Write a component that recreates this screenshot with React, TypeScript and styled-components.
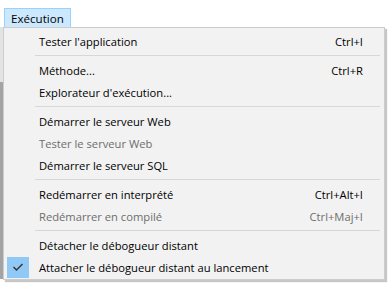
import React from 'react';
import styled, { createGlobalStyle } from 'styled-components';

const GlobalStyle = createGlobalStyle`
    html, body {
        margin: 0;
        padding: 0;
        background: #ffffff;
    }
    body {
        font-family: "Segoe UI", "Open Sans", "Noto Sans", sans-serif;
        font-size: 11.2px;
        color: #000000;
    }
`;

type MenuEntry =
    | { kind: 'item', label: string, shortcut?: string, disabled?: boolean, checked?: boolean }
    | { kind: 'separator' };

const entries: MenuEntry[] = [
    { kind: 'item', label: "Tester l'application", shortcut: 'Ctrl+I' },
    { kind: 'separator' },
    { kind: 'item', label: 'Méthode...', shortcut: 'Ctrl+R' },
    { kind: 'item', label: "Explorateur d'exécution..." },
    { kind: 'separator' },
    { kind: 'item', label: 'Démarrer le serveur Web' },
    { kind: 'item', label: 'Tester le serveur Web', disabled: true },
    { kind: 'item', label: 'Démarrer le serveur SQL' },
    { kind: 'separator' },
    { kind: 'item', label: 'Redémarrer en interprété', shortcut: 'Ctrl+Alt+I' },
    { kind: 'item', label: 'Redémarrer en compilé', shortcut: 'Ctrl+Maj+I', disabled: true },
    { kind: 'separator' },
    { kind: 'item', label: 'Détacher le débogueur distant' },
    { kind: 'item', label: 'Attacher le débogueur distant au lancement', checked: true },
];

const Page = styled.div`
    width: 389px;
    height: 286px;
    display: flex;
    flex-direction: column;
    overflow: hidden;
`;

const MenuBar = styled.div`
    height: 27px;
    box-sizing: border-box;
    padding: 8px 0 0 4px;
    display: flex;
    align-items: flex-start;
`;

const MenuTitle = styled.div`
    height: 19px;
    box-sizing: border-box;
    padding: 0 6px;
    display: flex;
    align-items: center;
    font-size: 11.6px;
    background: #cce8ff;
    border: 1px solid #99d1ff;
    border-bottom: none;
`;

const Body = styled.div`
    display: flex;
    align-items: flex-start;
`;

const BehindWindow = styled.div`
    width: 3px;
    height: 252px;
    background: linear-gradient(#e3e3e3 0 55px, #a3a3a3 55px);
`;

const Dropdown = styled.div`
    width: 382px;
    box-sizing: border-box;
    padding: 2px 2px 1px;
    background: #f2f2f2;
    border: 1px solid #cccccc;
    box-shadow: 2px 2px 1px rgba(0, 0, 0, 0.22);
`;

const Item = styled.div<{ $disabled?: boolean }>`
    height: 22px;
    display: grid;
    grid-template-columns: 32px 1fr auto;
    align-items: center;
    color: ${(props) => props.$disabled ? '#6d6d6d' : '#000000'};
    white-space: nowrap;
`;

const CheckCell = styled.div<{ $checked?: boolean }>`
    width: 22px;
    height: 21px;
    margin-left: 1px;
    display: flex;
    align-items: center;
    justify-content: center;
    background: ${(props) => props.$checked ? '#90c8f6' : 'transparent'};
`;

const Label = styled.span`
    padding-left: 1px;
`;

const Shortcut = styled.span`
    padding-right: 19px;
    text-align: right;
`;

const Separator = styled.div`
    height: 1px;
    margin: 3px 2px 3px 29px;
    background: #d7d7d7;
`;

const CheckMark = () => (
    <svg width="12" height="10" viewBox="0 0 12 10">
        <polyline points="1.5,5 4.5,8 10.5,2" fill="none" stroke="#333333" strokeWidth="1.4" />
    </svg>
);

export default function App() {
    return (
        <>
            <GlobalStyle />
            <Page>
                <MenuBar>
                    <MenuTitle>Exécution</MenuTitle>
                </MenuBar>
                <Body>
                    <BehindWindow />
                    <Dropdown>
                        {entries.map((entry, i) =>
                            entry.kind === 'separator' ? (
                                <Separator key={i} />
                            ) : (
                                <Item key={i} $disabled={entry.disabled}>
                                    <CheckCell $checked={entry.checked}>
                                        {entry.checked && <CheckMark />}
                                    </CheckCell>
                                    <Label>{entry.label}</Label>
                                    <Shortcut>{entry.shortcut}</Shortcut>
                                </Item>
                            )
                        )}
                    </Dropdown>
                </Body>
            </Page>
        </>
    );
}
